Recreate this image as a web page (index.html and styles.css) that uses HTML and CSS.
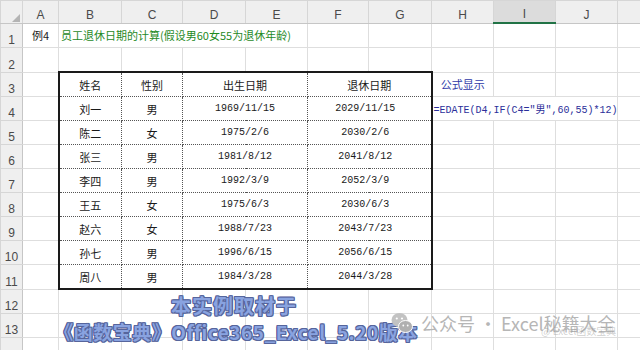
FILE: index.html
```html
<!DOCTYPE html>
<html lang="zh-CN">
<head>
<meta charset="utf-8">
<title>员工退休日期的计算</title>
<link rel="stylesheet" href="styles.css">
</head>
<body>
<div class="wrap">
<table class="sheet">
<colgroup>
<col class="w-rh"><col class="w-a"><col class="w-b"><col class="w-c"><col class="w-d"><col class="w-e"><col class="w-f"><col class="w-g"><col class="w-h"><col class="w-i"><col class="w-j"><col class="w-k">
</colgroup>
<tr class="hdr">
<th class="corner"><svg class="tri" width="8" height="8" viewBox="0 0 8 8"><polygon points="8,0 8,8 0,8" fill="#b4b4b4"/></svg></th>
<th>A</th><th>B</th><th>C</th><th>D</th><th>E</th><th>F</th><th>G</th><th>H</th><th class="sel">I</th><th>J</th><th></th>
</tr>
<tr><th class="rn">1</th><td class="ctr">例4</td><td colspan="4" class="title">员工退休日期的计算(假设男60女55为退休年龄)</td><td></td><td></td><td></td><td></td><td></td><td></td></tr>
<tr><th class="rn">2</th><td></td><td></td><td></td><td></td><td></td><td></td><td></td><td></td><td></td><td></td><td></td></tr>
<tr><th class="rn">3</th><td></td><td class="t top lft">姓名</td><td class="t top">性别</td><td colspan="2" class="t top">出生日期</td><td colspan="2" class="t top rgt">退休日期</td><td class="ctr label">公式显示</td><td></td><td></td><td></td></tr>
<tr><th class="rn">4</th><td></td><td class="t lft">刘一</td><td class="t">男</td><td colspan="2" class="t date">1969/11/15</td><td colspan="2" class="t rgt date ret">2029/11/15</td><td colspan="3" class="formula">=EDATE(D4,IF(C4="男",60,55)*12)</td><td></td></tr>
<tr><th class="rn">5</th><td></td><td class="t lft">陈二</td><td class="t">女</td><td colspan="2" class="t date">1975/2/6</td><td colspan="2" class="t rgt date ret">2030/2/6</td><td></td><td></td><td></td><td></td></tr>
<tr><th class="rn">6</th><td></td><td class="t lft">张三</td><td class="t">男</td><td colspan="2" class="t date">1981/8/12</td><td colspan="2" class="t rgt date ret">2041/8/12</td><td></td><td></td><td></td><td></td></tr>
<tr><th class="rn">7</th><td></td><td class="t lft">李四</td><td class="t">男</td><td colspan="2" class="t date">1992/3/9</td><td colspan="2" class="t rgt date ret">2052/3/9</td><td></td><td></td><td></td><td></td></tr>
<tr><th class="rn">8</th><td></td><td class="t lft">王五</td><td class="t">女</td><td colspan="2" class="t date">1975/6/3</td><td colspan="2" class="t rgt date ret">2030/6/3</td><td></td><td></td><td></td><td></td></tr>
<tr><th class="rn">9</th><td></td><td class="t lft">赵六</td><td class="t">女</td><td colspan="2" class="t date">1988/7/23</td><td colspan="2" class="t rgt date ret">2043/7/23</td><td></td><td></td><td></td><td></td></tr>
<tr><th class="rn">10</th><td></td><td class="t lft">孙七</td><td class="t">男</td><td colspan="2" class="t date">1996/6/15</td><td colspan="2" class="t rgt date ret">2056/6/15</td><td></td><td></td><td></td><td></td></tr>
<tr><th class="rn">11</th><td></td><td class="t lft bot">周八</td><td class="t bot">男</td><td colspan="2" class="t bot date">1984/3/28</td><td colspan="2" class="t rgt bot date ret">2044/3/28</td><td></td><td></td><td></td><td></td></tr>
<tr><th class="rn">12</th><td></td><td></td><td></td><td></td><td></td><td></td><td></td><td></td><td></td><td></td><td></td></tr>
<tr><th class="rn">13</th><td></td><td></td><td></td><td></td><td></td><td></td><td></td><td></td><td></td><td></td><td></td></tr>
<tr><th class="rn"></th><td></td><td></td><td></td><td></td><td></td><td></td><td></td><td></td><td></td><td></td><td></td></tr>
</table>

<div class="stamp">
<div class="stamp-l1">本实例取材于</div>
<div class="stamp-l2">《函数宝典》Office365_Excel_5.20版本</div>
</div>

<div class="wm">
<svg class="wx" width="22" height="22" viewBox="0 0 22 22">
<ellipse cx="8.5" cy="8" rx="8" ry="7" fill="#c2c2c2"/>
<ellipse cx="14.5" cy="14.5" rx="7" ry="6" fill="#b0b0b0" stroke="#fff" stroke-width="1"/>
<circle cx="5.8" cy="6.5" r="1.1" fill="#fff"/>
<circle cx="11" cy="6.5" r="1.1" fill="#fff"/>
<circle cx="12.3" cy="13.5" r="0.9" fill="#fff"/>
<circle cx="16.7" cy="13.5" r="0.9" fill="#fff"/>
</svg>
<span class="wm-text">公众号 · Excel秘籍大全</span>
<span class="wm-faint">@ Excel函数宝典</span>
</div>
</div>
</body>
</html>
```
FILE: styles.css
```css
html, body {
  margin: 0;
  padding: 0;
  background: #ffffff;
  overflow: hidden;
}

.wrap {
  position: relative;
  width: 640px;
  height: 350px;
  overflow: hidden;
}

.sheet {
  border-collapse: collapse;
  table-layout: fixed;
  width: 640px;
}

.w-rh { width: 22px; }
.w-a { width: 36px; }
.w-b { width: 63px; }
.w-c { width: 61px; }
.w-d { width: 63px; }
.w-e { width: 62px; }
.w-f { width: 61px; }
.w-g { width: 63px; }
.w-h { width: 62px; }
.w-i { width: 62px; }
.w-j { width: 62px; }
.w-k { width: 23px; }

.sheet th {
  background: #efefef;
  color: #4a4a4a;
  font: 12px "Liberation Sans", Arial, sans-serif;
  font-weight: normal;
  border: 1px solid #d6d6d6;
  padding: 0;
  vertical-align: bottom;
  text-align: center;
}

.hdr th {
  height: 20px;
  padding-bottom: 1px;
  border-bottom: 1px solid #c6c6c6;
}

.hdr th.sel {
  background: #dcdcdc;
  border-bottom: 2px solid #217346;
}

.sheet th.corner {
  text-align: right;
}

.tri {
  display: block;
  margin: 0 2px 0 auto;
}

.sheet th.rn {
  border-right: 1px solid #c6c6c6;
  padding-bottom: 0;
  line-height: 14px;
}

.sheet td {
  border: 1px solid #dedede;
  height: 23px;
  padding: 0 2px;
  font: 11px "Noto Sans CJK SC", sans-serif;
  color: #1a1a1a;
  white-space: nowrap;
  overflow: visible;
  vertical-align: middle;
}

.sheet td.ctr { text-align: center; }

.sheet td.title {
  color: #1f8a1f;
  text-align: left;
  padding-left: 2px;
}

.sheet td.label {
  color: #2f3aa8;
}

.sheet td.formula {
  font: 10px "Liberation Mono", "Noto Sans CJK SC", monospace;
  color: #2b2f9a;
  padding-left: 1px;
  text-align: left;
}

.sheet td.t {
  border: 1px dotted #555555;
  text-align: center;
}

.sheet td.top { border-top: 2px solid #1a1a1a; }
.sheet td.bot { border-bottom: 2px solid #1a1a1a; }
.sheet td.lft { border-left: 2px solid #1a1a1a; }
.sheet td.rgt { border-right: 2px solid #1a1a1a; }

.sheet td.date {
  font: 10px "Liberation Mono", monospace;
}

.sheet td.ret {
  padding-right: 10px;
}

.stamp {
  position: absolute;
  left: 34px;
  top: 293px;
  width: 400px;
  text-align: center;
  font-family: "Noto Sans CJK SC", sans-serif;
  font-weight: 700;
  color: #89a3e0;
  text-shadow:
    1px 0 0 #56659c, -1px 0 0 #56659c, 0 1px 0 #56659c, 0 -1px 0 #56659c,
    1px 1px 0 #56659c, -1px -1px 0 #56659c, 1px -1px 0 #56659c, -1px 1px 0 #56659c,
    0 0 3px #ffffff, 0 0 3px #ffffff;
}

.stamp-l1 {
  font-size: 20px;
  line-height: 26px;
  letter-spacing: 1px;
}

.stamp-l2 {
  font-size: 19px;
  line-height: 26px;
  letter-spacing: 0.5px;
  padding-left: 4px;
}

.wm {
  position: absolute;
  left: 391px;
  top: 312px;
  display: flex;
  align-items: center;
  gap: 8px;
  font-family: "Noto Sans CJK SC", sans-serif;
}

.wm-text {
  font-size: 18px;
  color: #b6b6b6;
  line-height: 22px;
}

.wm-faint {
  position: absolute;
  left: 150px;
  top: 11px;
  font-size: 10px;
  color: rgba(150, 150, 150, 0.45);
  white-space: nowrap;
}
```
